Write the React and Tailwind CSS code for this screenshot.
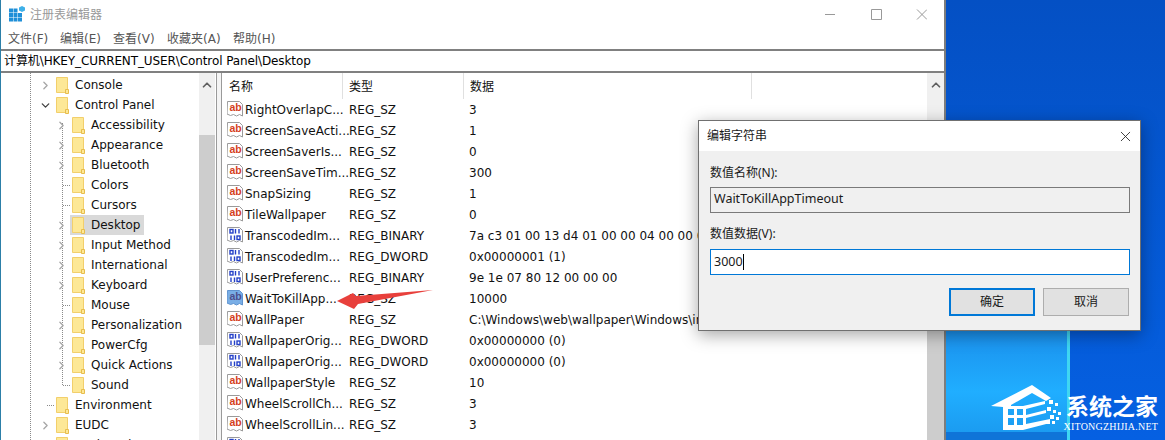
import { ChevronRight, ChevronDown, ChevronUp, X } from 'lucide-react';

const FONT = "font-['DejaVu_Sans','Noto_Sans_CJK_SC',sans-serif]";

const treeRows = [
  { label: 'Console', level: 1, arrow: 'right' },
  { label: 'Control Panel', level: 1, arrow: 'down' },
  { label: 'Accessibility', level: 2, arrow: 'right' },
  { label: 'Appearance', level: 2, arrow: 'right' },
  { label: 'Bluetooth', level: 2, arrow: 'right' },
  { label: 'Colors', level: 2 },
  { label: 'Cursors', level: 2 },
  { label: 'Desktop', level: 2, arrow: 'right', selected: true },
  { label: 'Input Method', level: 2, arrow: 'right' },
  { label: 'International', level: 2, arrow: 'right' },
  { label: 'Keyboard', level: 2, arrow: 'right' },
  { label: 'Mouse', level: 2 },
  { label: 'Personalization', level: 2, arrow: 'right' },
  { label: 'PowerCfg', level: 2, arrow: 'right' },
  { label: 'Quick Actions', level: 2, arrow: 'right' },
  { label: 'Sound', level: 2 },
  { label: 'Environment', level: 1 },
  { label: 'EUDC', level: 1, arrow: 'right' },
  { label: 'Keyboard Layout', level: 1, arrow: 'right' },
];

const valueRows = [
  ['RightOverlapC...', 'REG_SZ', '3'],
  ['ScreenSaveActi...', 'REG_SZ', '1'],
  ['ScreenSaverIs...', 'REG_SZ', '0'],
  ['ScreenSaveTim...', 'REG_SZ', '300'],
  ['SnapSizing', 'REG_SZ', '1'],
  ['TileWallpaper', 'REG_SZ', '0'],
  ['TranscodedIm...', 'REG_BINARY', '7a c3 01 00 13 d4 01 00 00 04 00 00 00'],
  ['TranscodedIm...', 'REG_DWORD', '0x00000001 (1)'],
  ['UserPreferenc...', 'REG_BINARY', '9e 1e 07 80 12 00 00 00'],
  ['WaitToKillApp...', 'REG_SZ', '10000'],
  ['WallPaper', 'REG_SZ', 'C:\\Windows\\web\\wallpaper\\Windows\\in'],
  ['WallpaperOrig...', 'REG_DWORD', '0x00000000 (0)'],
  ['WallpaperOrig...', 'REG_DWORD', '0x00000000 (0)'],
  ['WallpaperStyle', 'REG_SZ', '10'],
  ['WheelScrollCh...', 'REG_SZ', '3'],
  ['WheelScrollLin...', 'REG_SZ', '3'],
  ['', '', ''],
];

const Folder = () => (
  <svg width="13" height="17" viewBox="0 0 13 17" className="shrink-0">
    <path d="M.5.5h11v15H.5z" fill="#fde896" stroke="#f2cf6b" />
    <path d="M9.5 12.5h3v4h-3z" fill="#fde896" stroke="#e8bd4c" />
  </svg>
);

const RegIcon = ({ type, active }) => {
  const fill = active ? '#79aee6' : '#ffffff';
  const stroke = active ? '#5f93cf' : '#9a9a9a';
  return (
    <svg width="17" height="17" viewBox="0 0 17 17" className="shrink-0">
      <path d="M.5.5h12l3 3v11.500l-3-1.500-3 1.500-3-1.500-3 1-3.500-1.500z" fill={fill} stroke={stroke} />
      {type === 'REG_SZ' ? (
        <text x="2.500" y="10" fontSize="10.500" fontWeight="700" fontFamily="Liberation Sans" fill={active ? '#4d4f8c' : '#d5411e'}>ab</text>
      ) : (
        <g fill="none" stroke="#2440c8" strokeWidth="1.400">
          <rect x="3" y="2.500" width="3" height="3.500" />
          <path d="M8.500 2v4.500M12 2v4.500M4 8.500v4.500M7.500 8.500v4.500" />
          <rect x="10" y="9" width="3" height="3.500" />
        </g>
      )}
    </svg>
  );
};

const TreeRow = ({ label, level, arrow, selected }) => (
  <div className={`relative flex h-5 items-center ${level === 1 ? 'pl-[39px]' : 'pl-[55px]'}`}>
    {!arrow && <span className="ml-[7px] h-0 w-[7px] border-t border-dotted border-[#8a8a8a]" />}
    {arrow === 'right' && <ChevronRight size={13} strokeWidth={2.4} className="ml-[-1px] mr-[2px] text-[#a6a6a6]" />}
    {arrow === 'down' && <ChevronDown size={13} strokeWidth={2.4} className="ml-[-1px] mr-[2px] text-[#404040]" />}
    <span className={`flex h-5 items-center gap-[6px] pl-[2px] ${selected ? 'bg-[#d9d9d9] pr-[3px]' : ''}`}>
      <Folder />
      <span>{label}</span>
    </span>
  </div>
);

const ValueRow = ({ name, type, data, active }) => (
  <div className="flex h-[21px] shrink-0 items-center whitespace-nowrap">
    <div className="flex w-[120px] shrink-0 items-center gap-[1px] pl-[5px]">
      <RegIcon type={type} active={active} />
      {name && <span>{name}</span>}
    </div>
    <div className="w-[120px] shrink-0 pl-[7px]">{type}</div>
    <div className="pl-[7px]">{data}</div>
  </div>
);

const Wallpaper = () => (
  <svg className="block h-full w-full" viewBox="0 0 219 440" preserveAspectRatio="none">
    <defs>
      <linearGradient id="light" x1="0" y1="0" x2="0" y2="1">
        <stop offset="0" stopColor="#0c5fd4" />
        <stop offset="0.65" stopColor="#1a8fec" />
        <stop offset="0.85" stopColor="#20aeff" />
        <stop offset="1" stopColor="#1a98ee" />
      </linearGradient>
      <linearGradient id="dark" x1="0" y1="0" x2="0" y2="1">
        <stop offset="0" stopColor="#0450c4" />
        <stop offset="1" stopColor="#0560e2" />
      </linearGradient>
    </defs>
    <rect width="219" height="440" fill="url(#dark)" />
    <rect x="0" y="120" width="121" height="320" fill="url(#light)" />
    <rect x="0" y="432" width="121" height="8" fill="#0f74d8" />
    <rect x="121" y="300" width="3" height="140" fill="#3fd6f2" />
  </svg>
);

const Logo = () => (
  <div className="absolute left-[990px] top-[384px] flex items-start">
    <svg width="72" height="50" viewBox="990 384 72 50" className="shrink-0">
      <g fill="#ffffff">
        <path d="M991 406 1032 385 1051 398 1046 401 1032 393 1011 405 1011 407 1003 407Z" />
        <path d="M1003 406h5v19h15v5h-20z" />
        <path d="M1008 406h15v3h-6v6h6v3h-6v7h-3v-7h-6v-3h6v-6h-6z" />
        <path d="M1023 406l22-5v3l-19 5v6l20-5v3l-20 5v6l24-5v4l-27 7z" />
        <path d="M1049 400h4v4h-4zM1055 403h3v3h-3zM1047 407h4v4h-4zM1053 410h3v3h-3zM1058 412h3v3h-3zM1050 415h4v4h-4zM1056 417h3v3h-3zM1046 420h4v4h-4zM1052 421h3v3h-3z" />
      </g>
    </svg>
    <div className="ml-[4px] flex flex-col items-end whitespace-nowrap text-white">
      <span className="mt-[7px] font-['Noto_Sans_CJK_SC',sans-serif] text-[23px] leading-[29px] font-bold">系统之家</span>
      <span className="ml-[-10px] mt-[2px] font-['Liberation_Serif',serif] text-[10px] leading-[10px] tracking-[0.2px]">XITONGZHIJIA.NET</span>
    </div>
  </div>
);

const Dialog = () => (
  <div className="absolute left-[698px] top-[120px] flex h-[211px] w-[443px] flex-col border border-[#707070] bg-[#f0f0f0] font-['Noto_Sans','Noto_Sans_CJK_SC',sans-serif] text-[12px] text-[#1a1a1a] shadow-[0_4px_16px_rgba(0,0,0,0.35)]">
    <div className="flex h-[30px] shrink-0 items-center justify-between bg-white pl-[8px] pr-[6px]">
      <span>编辑字符串</span>
      <X size={17} strokeWidth={1.2} className="text-[#222]" />
    </div>
    <div className="flex flex-1 flex-col pl-[11px] pr-[10px]">
      <div className="mt-[13px] h-[18px] leading-[18px]">数值名称(N):</div>
      <div className="mt-[5px] flex h-[26px] items-center border border-[#7a7a7a] pb-[2px] pl-[3px] text-[12.5px]">WaitToKillAppTimeout</div>
      <div className="mt-[12px] h-[18px] leading-[18px]">数值数据(V):</div>
      <div className="mt-[6px] flex h-[26px] items-center border border-[#0078d7] bg-white pl-[3px] text-[12.5px]">
        3000<span className="h-[16px] w-px bg-black" />
      </div>
      <div className="mt-[13px] flex justify-end gap-[8px] pr-[1px]">
        <button className="flex h-[28px] w-[86px] items-center justify-center border-2 border-[#0078d7] bg-[#e1e1e1]">确定</button>
        <button className="flex h-[28px] w-[86px] items-center justify-center border border-[#adadad] bg-[#e1e1e1]">取消</button>
      </div>
    </div>
  </div>
);

const App = () => {
  return (
    <div className={`relative flex h-[440px] w-[1165px] overflow-hidden text-[12px] text-[#111] ${FONT}`}>
      <div className="flex h-full w-[946px] shrink-0 flex-col border-l border-l-[#2c7fa8] border-r-2 border-r-[#7d7d7d] bg-white">
        {/* title bar */}
        <div className="flex h-[29px] shrink-0 items-center pl-[8px]">
          <svg width="17" height="17" viewBox="0 0 17 17" className="shrink-0">
            <path d="M0 2.500h4v4H0zM4.500 2.500h4v4h-4zM0 7h4v4H0zM4.500 7h4v4h-4zM9 7h4v4H9zM0 11.500h4v4H0zM4.500 11.500h4v4h-4zM9 11.500h4v4H9z" fill="#1f8fd8" />
            <path d="M10 1.500 13 0 16 1.500V4.500L13 6 10 4.500z" fill="#3fb0e8" />
          </svg>
          <span className="ml-[4px] text-[#999]">注册表编辑器</span>
          {/* minimize, maximize, close */}
          <svg width="102" height="12" viewBox="0 0 102 12" className="ml-auto mr-[17px] text-[#999]" fill="none" stroke="currentColor">
            <path d="M0 5.500h10M46.500 .5h10v10h-10zM92 .5l10 10M102 .5l-10 10" />
          </svg>
        </div>
        {/* menu */}
        <div className="flex h-[20px] shrink-0 items-center pl-[7px] text-[#555]">
          <span className="w-[52px]">文件(F)</span>
          <span className="w-[53px]">编辑(E)</span>
          <span className="w-[54px]">查看(V)</span>
          <span className="w-[66px]">收藏夹(A)</span>
          <span>帮助(H)</span>
        </div>
        {/* address */}
        <div className="flex h-[24px] shrink-0 items-center border-y-2 border-[#808080] pl-[3px] tracking-[-0.1px] text-black">
          计算机\HKEY_CURRENT_USER\Control Panel\Desktop
        </div>
        <div className="flex min-h-0 flex-1">
          {/* tree */}
          <div className="relative flex w-[215px] shrink-0 overflow-hidden">
            <span className="absolute bottom-0 left-[29px] top-0 border-l border-dotted border-[#8a8a8a]" />
            <span className="absolute left-[61px] top-[50px] h-[262px] border-l border-dotted border-[#8a8a8a]" />
            <div className="w-[198px] shrink-0 pt-[2px] whitespace-nowrap">
              {treeRows.map((row) => (
                <TreeRow key={row.label} {...row} />
              ))}
            </div>
            <div className="flex w-[16px] shrink-0 flex-col items-center bg-[#f0f0f0]">
              <ChevronUp size={14} strokeWidth={3} className="mt-[5px] text-[#606060]" />
              <div className="mt-[43px] h-[210px] w-full bg-[#cdcdcd]" />
            </div>
          </div>
          {/* splitter */}
          <div className="w-[6px] shrink-0 border-x border-[#9a9a9a] bg-[#f4f4f4]" />
          {/* values */}
          <div className="flex min-w-0 flex-1">
            <div className="flex min-w-0 flex-1 flex-col overflow-hidden">
              <div className="flex h-[26px] shrink-0 items-center whitespace-nowrap">
                <div className="h-full w-[121px] shrink-0 border-r border-[#e0e0e0] pl-[7px] pt-[1px] leading-[26px]">名称</div>
                <div className="h-full w-[121px] shrink-0 border-r border-[#e0e0e0] pl-[6px] pt-[1px] leading-[26px]">类型</div>
                <div className="h-full w-[288px] shrink-0 border-r border-[#e0e0e0] pl-[6px] pt-[1px] leading-[26px]">数据</div>
              </div>
              {valueRows.map((row, i) => (
                <ValueRow key={i} name={row[0]} type={row[1]} data={row[2]} active={i === 9} />
              ))}
            </div>
            <div className="flex w-[17px] shrink-0 flex-col items-center bg-[#f0f0f0]">
              <ChevronUp size={14} strokeWidth={3} className="mt-[5px] text-[#606060]" />
              <div className="mt-[110px] w-full flex-1 bg-[#cdcdcd]" />
            </div>
          </div>
        </div>
      </div>
      <div className="min-w-0 flex-1">
        <Wallpaper />
      </div>
      {/* red arrow from the screenshot */}
      <svg className="absolute left-[330px] top-[285px]" width="110" height="30" viewBox="330 285 110 30">
        <path d="M337 301 353 293 356 296 433 290 358 304 354 309Z" fill="#e8403c" />
      </svg>
      <Dialog />
      <Logo />
    </div>
  );
};

export default App;
